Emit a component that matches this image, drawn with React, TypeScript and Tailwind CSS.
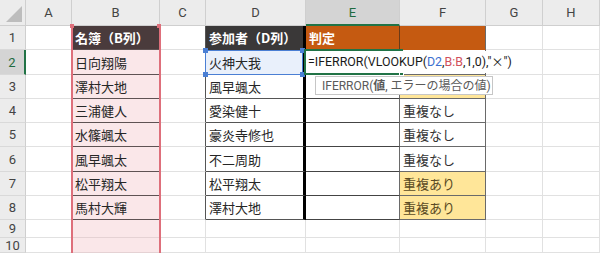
import React from "react";

type P = { children?: React.ReactNode; className?: string };

// Plain worksheet cell: right + bottom borders, colours passed in full.
function Cell({ children, className = "" }: P) {
  return (
    <div
      className={
        "flex items-center overflow-hidden whitespace-nowrap border-r border-b pl-[3px] text-[13px] leading-none " +
        className
      }
    >
      {children}
    </div>
  );
}

// Column letters and row numbers.
function Head({ children, className = "" }: P) {
  return (
    <div
      className={
        "flex items-center justify-center overflow-hidden border-r border-b font-['Roboto',sans-serif] text-[13px] leading-none " +
        className
      }
    >
      {children}
    </div>
  );
}

const GRID = "border-r-[#e1e1e1] border-b-[#e1e1e1] bg-white";
const HEAD = "bg-[#ececec] border-r-[#cfcfcf] border-b-[#cfcfcf] text-[#444]";
const ROWH = "bg-[#ececec] border-r-[#cfcfcf] border-b-[#d9d9d9] text-[#444]";
const PINK = "bg-[#fae7e9] border-r-[#e1e1e1] border-b-[#5e5253] text-[#262626]";
const PINK_EMPTY = "bg-[#fae7e9] border-r-[#e1e1e1] border-b-[#e5d2d4]";
const NAME_D = "bg-white border-r-[3px] border-r-black border-b-[#555] text-[#262626]";
const EMPTY_E = "bg-white border-r-[#6a6a6a] border-b-[#444]";
const F_NONE = "bg-white border-r-[#6a6a6a] border-b-[#6a6a6a] text-[#333]";
const F_DUP = "bg-[#ffe699] border-r-[#6a6a6a] border-b-[#6a6a6a] text-[#5a4a24]";
const C_EDGE = "border-r-[#555] border-b-[#e1e1e1] bg-white";

const B_NAMES = ["日向翔陽", "澤村大地", "三浦健人", "水篠颯太", "風早颯太", "松平翔太", "馬村大輝"];
const D_NAMES = ["火神大我", "風早颯太", "愛染健十", "豪炎寺修也", "不二周助", "松平翔太", "澤村大地"];
// F2 sits under the open editor and F3 under the hint box, so they show no text.
const F_VALS = ["", "", "重複なし", "重複なし", "重複なし", "重複あり", "重複あり"];
const F_DUPS = [false, true, false, false, false, true, true];

export default function App() {
  return (
    <div className="relative h-[253px] w-[600px] overflow-hidden bg-white font-['Noto_Sans_CJK_JP','Noto_Sans',sans-serif]">
      <div className="grid grid-cols-[26px_46px_88px_46px_100px_94px_86px_57px_57px] grid-rows-[26px_24px_25px_24px_24px_24px_25px_24px_24px_18px_15px]">
        {/* column headers */}
        <div className="relative border-r border-b border-r-[#cfcfcf] border-b-[#cfcfcf] bg-[#ececec]">
          <div className="absolute bottom-[3px] right-[3px] h-0 w-0 border-b-[16px] border-l-[16px] border-b-[#bdbdbd] border-l-transparent" />
        </div>
        <Head className={HEAD}>A</Head>
        <Head className={HEAD}>B</Head>
        <Head className={HEAD}>C</Head>
        <Head className={HEAD}>D</Head>
        <Head className="bg-[#d4d4d4] border-r-[#cfcfcf] border-b-2 border-b-[#217346] text-[#1e6b40]">E</Head>
        <Head className={HEAD}>F</Head>
        <Head className={HEAD}>G</Head>
        <Head className={HEAD}>H</Head>

        {/* row 1: table headings */}
        <Head className={ROWH}>1</Head>
        <Cell className={GRID} />
        <Cell className="bg-[#4a3b3c] border-r-[#e1e1e1] border-b-[#5e5253] font-bold text-white">名簿（B列）</Cell>
        <Cell className={C_EDGE} />
        <Cell className="bg-[#3a3838] border-r-[3px] border-r-black border-b-[#3a3838] font-bold text-white">参加者（D列）</Cell>
        <Cell className="bg-[#c55a11] border-r-[#6b3a17] border-b-[#c55a11] font-bold text-white">判定</Cell>
        <Cell className="bg-[#c55a11] border-r-[#6a6a6a] border-b-[#c55a11]" />
        <Cell className={GRID} />
        <Cell className={GRID} />

        {/* rows 2–8: names and results */}
        {B_NAMES.map((b, i) => {
          const n = i + 2;
          const active = n === 2;
          return (
            <React.Fragment key={n}>
              <Head
                className={
                  active
                    ? "bg-[#d4d4d4] border-r-2 border-r-[#217346] border-b-[#d9d9d9] text-[#1e6b40]"
                    : ROWH
                }
              >
                {n}
              </Head>
              <Cell className={GRID} />
              <Cell className={PINK}>{b}</Cell>
              <Cell className={C_EDGE} />
              <Cell className={active ? NAME_D + " !bg-[#e9f0fb]" : NAME_D}>{D_NAMES[i]}</Cell>
              <Cell className={EMPTY_E} />
              <Cell className={F_DUPS[i] ? F_DUP : F_NONE}>{F_VALS[i]}</Cell>
              <Cell className={GRID} />
              <Cell className={GRID} />
            </React.Fragment>
          );
        })}

        {/* rows 9–10: empty */}
        {[9, 10].map((n) => (
          <React.Fragment key={n}>
            <Head className={ROWH}>{n}</Head>
            <Cell className={GRID} />
            <Cell className={PINK_EMPTY} />
            <Cell className={GRID} />
            <Cell className={GRID} />
            <Cell className={GRID} />
            <Cell className={GRID} />
            <Cell className={GRID} />
            <Cell className={GRID} />
          </React.Fragment>
        ))}
      </div>

      {/* B:B reference highlight */}
      <div className="pointer-events-none absolute left-[71px] top-[26px] h-[240px] w-[90px] border-x-2 border-[#de6f7b]" />
      <div className="absolute left-[70px] top-[24px] h-[4px] w-[4px] bg-[#de6f7b]" />
      <div className="absolute left-[157px] top-[24px] h-[4px] w-[4px] bg-[#de6f7b]" />

      {/* D2 reference highlight */}
      <div className="pointer-events-none absolute left-[205px] top-[50px] h-[25px] w-[98px] border-[1.5px] border-[#4a7fd4]" />
      <div className="absolute left-[203px] top-[48px] h-[5px] w-[5px] bg-[#4a7fd4]" />
      <div className="absolute left-[300px] top-[48px] h-[5px] w-[5px] bg-[#4a7fd4]" />
      <div className="absolute left-[203px] top-[72px] h-[5px] w-[5px] bg-[#4a7fd4]" />
      <div className="absolute left-[300px] top-[72px] h-[5px] w-[5px] bg-[#4a7fd4]" />

      {/* active cell E2 frame, then the in-cell editor over it */}
      <div className="pointer-events-none absolute left-[304px] top-[49px] h-[26px] w-[99px] border-2 border-[#217346]" />
      <div className="absolute left-[399px] top-[71px] h-[5px] w-[5px] border border-white bg-[#217346]" />
      <div className="absolute left-[306px] top-[51px] flex h-[22px] w-[206px] items-center whitespace-nowrap bg-white pl-[2px] font-['Roboto','Noto_Sans_CJK_JP',sans-serif] text-[12.4px] leading-none text-[#1a1a1a]">
        =IFERROR(VLOOKUP(<span className="text-[#3b6fd0]">D2</span>,<span className="text-[#d0505c]">B:B</span>,1,0),"<span className="font-['Noto_Sans_CJK_JP',sans-serif] text-[12px]">×</span>")
      </div>

      {/* argument hint */}
      <div className="absolute left-[315px] top-[76px] flex h-[19px] w-[178px] items-center whitespace-nowrap border border-[#c6c6c6] bg-white pl-[6px] font-['Roboto','Noto_Sans_CJK_JP',sans-serif] text-[12px] leading-none text-[#5a5a5a]">
        IFERROR(<span className="font-bold">値</span>, エラーの場合の値)
      </div>
    </div>
  );
}
